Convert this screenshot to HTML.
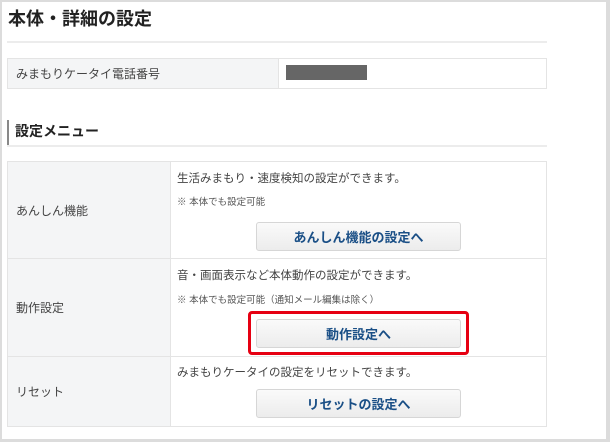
<!DOCTYPE html>
<html><head><meta charset="utf-8"><style>
*{margin:0;padding:0;box-sizing:border-box}
body{width:610px;height:442px;background:#fff;font-family:"Liberation Sans","Noto Sans CJK JP",sans-serif;color:#333;position:relative;overflow:hidden}
.frame{position:absolute;left:0;top:0;width:610px;height:442px;border:2px solid #dcdcdc;border-left:2px solid #dcdcdc;border-right:4px solid #dcdcdc;border-bottom:3px solid #dcdcdc}
.abs{position:absolute}
h1{position:absolute;left:8px;top:5px;font-size:18px;font-weight:bold;color:#222}
.hr{position:absolute;left:7px;width:540px;height:2px;background:#ececec}
.cellL{position:absolute;background:#f4f5f6;border:1px solid #e4e4e4;font-size:12px;color:#444;display:flex;align-items:center;padding-left:8px}
.cellR{position:absolute;background:#fff;border:1px solid #e4e4e4}
.btn{position:absolute;left:256px;width:205px;height:29px;border:1px solid #d6d6d6;border-radius:3px;background:linear-gradient(#fafafa,#ececec);color:#1a4f86;font-weight:bold;font-size:13px;display:flex;align-items:center;justify-content:center}
.t{position:absolute;left:177px;font-size:11.5px;color:#444}
.n{position:absolute;left:177px;font-size:9.5px;color:#555}
</style></head><body>
<div class="frame"></div>
<h1>本体・詳細の設定</h1>
<div class="hr" style="top:41px"></div>
<div class="cellL" style="left:7px;top:58px;width:272px;height:31px">みまもりケータイ電話番号</div>
<div class="cellR" style="left:278px;top:58px;width:269px;height:31px"></div>
<div class="abs" style="left:286px;top:65px;width:81px;height:15px;background:#666"></div>
<div class="abs" style="left:7px;top:120px;width:2px;height:26px;background:#888"></div>
<div class="abs" style="left:15px;top:121px;font-size:14px;font-weight:bold;color:#222">設定メニュー</div>
<div class="hr" style="top:145px"></div>

<div class="cellL" style="left:7px;top:161px;width:164px;height:98px">あんしん機能</div>
<div class="cellR" style="left:170px;top:161px;width:377px;height:98px"></div>
<div class="cellL" style="left:7px;top:258px;width:164px;height:99px">動作設定</div>
<div class="cellR" style="left:170px;top:258px;width:377px;height:99px"></div>
<div class="cellL" style="left:7px;top:356px;width:164px;height:71px">リセット</div>
<div class="cellR" style="left:170px;top:356px;width:377px;height:71px"></div>

<div class="t" style="top:170px">生活みまもり・速度検知の設定ができます。</div>
<div class="n" style="top:194px">※ 本体でも設定可能</div>
<div class="btn" style="top:222px">あんしん機能の設定へ</div>

<div class="t" style="top:267px">音・画面表示など本体動作の設定ができます。</div>
<div class="n" style="top:292px">※ 本体でも設定可能（通知メール編集は除く）</div>
<div class="abs" style="left:248px;top:311px;width:221px;height:44px;border:3px solid #e60012;border-radius:4px"></div>
<div class="btn" style="top:319px">動作設定へ</div>

<div class="t" style="top:364px">みまもりケータイの設定をリセットできます。</div>
<div class="btn" style="top:389px">リセットの設定へ</div>
</body></html>
